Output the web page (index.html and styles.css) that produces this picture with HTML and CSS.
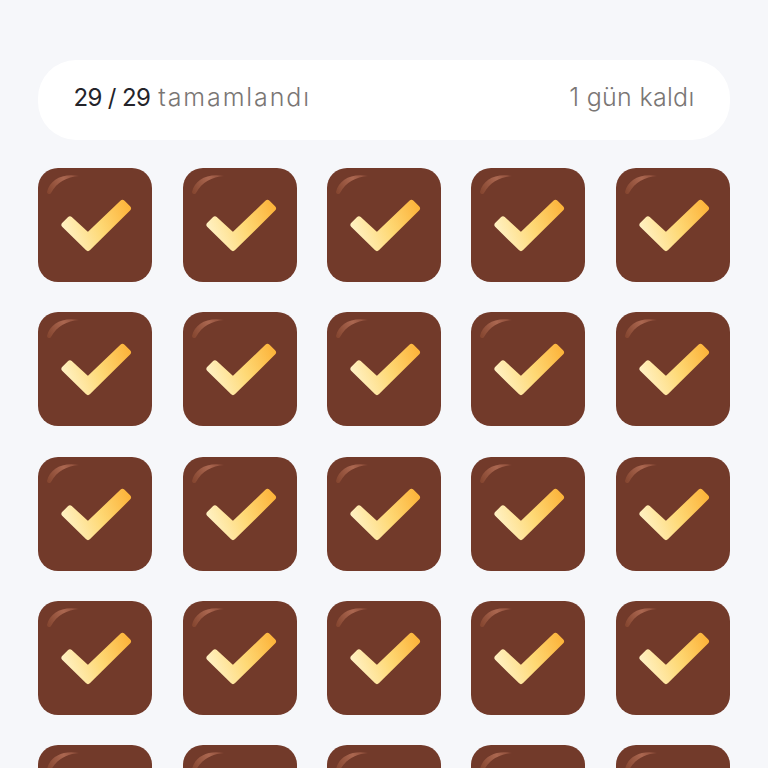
FILE: index.html
```html
<!DOCTYPE html>
<html lang="tr">

<head>
    <meta charset="utf-8">
    <meta name="viewport" content="width=device-width, initial-scale=1.0">
    <title>Takvim</title>
    <link rel="stylesheet" href="styles.css">
</head>

<body>
    <svg class="defs" aria-hidden="true">
        <defs>
            <linearGradient id="checkFill" gradientUnits="userSpaceOnUse" x1="24" y1="62" x2="92" y2="36">
                <stop offset="0" stop-color="#fff2c6"/>
                <stop offset="0.5" stop-color="#fed976"/>
                <stop offset="1" stop-color="#fcb238"/>
            </linearGradient>
            <linearGradient id="shineFill" gradientUnits="userSpaceOnUse" x1="9" y1="24" x2="40" y2="7">
                <stop offset="0" stop-color="#84452f"/>
                <stop offset="0.6" stop-color="#ab6750"/>
                <stop offset="1" stop-color="#8a4a37"/>
            </linearGradient>
            <symbol id="doneTile" viewBox="0 0 114 114">
                <path d="M9 24C12 12 24 5 41 8C29 9 19 14 13 25C12 27 9 26 9 24Z" fill="url(#shineFill)"/>
                <path d="M26.5 57L32 51.5L50 68L84.5 35L90 40.5L50 80Z" fill="url(#checkFill)" stroke="url(#checkFill)" stroke-width="6" stroke-linejoin="round"/>
            </symbol>
        </defs>
    </svg>

    <div class="main">
        <div class="summary">
            <div><span class="count">29 / 29</span> <span class="done">tamamlandı</span></div>
            <div class="left">1 gün kaldı</div>
        </div>

        <div class="days">
            <div class="day"><svg><use href="#doneTile"/></svg></div>
            <div class="day"><svg><use href="#doneTile"/></svg></div>
            <div class="day"><svg><use href="#doneTile"/></svg></div>
            <div class="day"><svg><use href="#doneTile"/></svg></div>
            <div class="day"><svg><use href="#doneTile"/></svg></div>
            <div class="day"><svg><use href="#doneTile"/></svg></div>
            <div class="day"><svg><use href="#doneTile"/></svg></div>
            <div class="day"><svg><use href="#doneTile"/></svg></div>
            <div class="day"><svg><use href="#doneTile"/></svg></div>
            <div class="day"><svg><use href="#doneTile"/></svg></div>
            <div class="day"><svg><use href="#doneTile"/></svg></div>
            <div class="day"><svg><use href="#doneTile"/></svg></div>
            <div class="day"><svg><use href="#doneTile"/></svg></div>
            <div class="day"><svg><use href="#doneTile"/></svg></div>
            <div class="day"><svg><use href="#doneTile"/></svg></div>
            <div class="day"><svg><use href="#doneTile"/></svg></div>
            <div class="day"><svg><use href="#doneTile"/></svg></div>
            <div class="day"><svg><use href="#doneTile"/></svg></div>
            <div class="day"><svg><use href="#doneTile"/></svg></div>
            <div class="day"><svg><use href="#doneTile"/></svg></div>
            <div class="day"><svg><use href="#doneTile"/></svg></div>
            <div class="day"><svg><use href="#doneTile"/></svg></div>
            <div class="day"><svg><use href="#doneTile"/></svg></div>
            <div class="day"><svg><use href="#doneTile"/></svg></div>
            <div class="day"><svg><use href="#doneTile"/></svg></div>
            <div class="day"><svg><use href="#doneTile"/></svg></div>
            <div class="day"><svg><use href="#doneTile"/></svg></div>
            <div class="day"><svg><use href="#doneTile"/></svg></div>
            <div class="day"><svg><use href="#doneTile"/></svg></div>
        </div>
    </div>
</body>

</html>
```

FILE: styles.css
```css
html, body {
    height: 100%;
    overflow: hidden;
}

body {
    margin: 0;
    background: #f6f7fa;
    font-family: Inter, "Open Sans", sans-serif;
    font-size: 24px;
}

.defs {
    display: block;
    width: 0;
    height: 0;
}

.main {
    display: flex;
    flex-direction: column;
    gap: 28px;
    padding: 60px 38.4px 38.4px;
}

.summary {
    display: flex;
    justify-content: space-between;
    align-items: center;
    height: 74px;
    padding: 0 35px 6px;
    background: #ffffff;
    border-radius: 38px;
}

.count {
    color: #24242a;
    letter-spacing: -0.6px;
}

.done {
    margin-left: 1px;
    color: #7a7674;
    font-size: 25px;
    font-weight: 300;
    letter-spacing: 1.9px;
}

.left {
    color: #7a7674;
    font-size: 25px;
    font-weight: 300;
    letter-spacing: 0.3px;
}

.days {
    display: grid;
    grid-template-columns: repeat(5, 1fr);
    gap: 30.4px;
}

.day {
    aspect-ratio: 1;
    background: #723a2a;
    border-radius: 20px;
}

.day svg {
    display: block;
    width: 100%;
    height: 100%;
}
```
